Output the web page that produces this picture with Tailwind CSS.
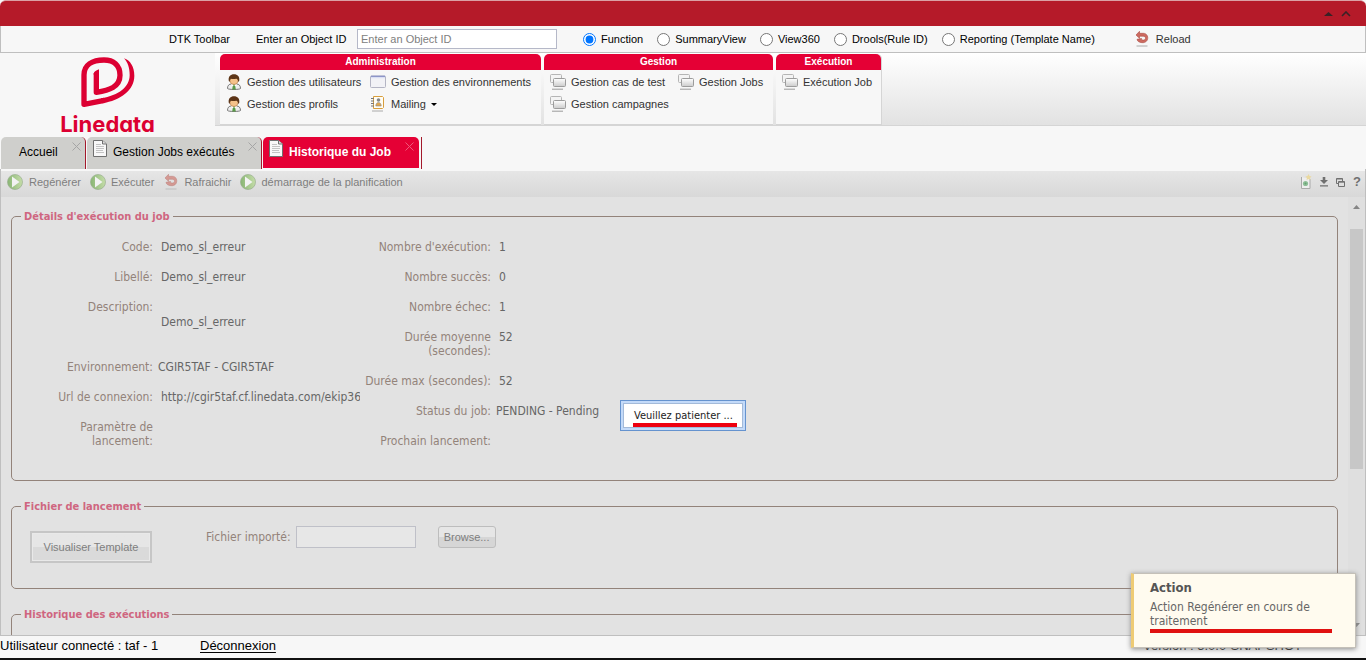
<!DOCTYPE html>
<html lang="fr">
<head>
<meta charset="utf-8">
<meta name="viewport" content="width=device-width, initial-scale=1">
<title>Historique du Job</title>
<script src="https://cdn.jsdelivr.net/npm/@tailwindcss/browser@4"></script>
</head>
<body class="relative flex h-screen flex-col overflow-hidden bg-[#f7f7f7] font-['Liberation_Sans',Arial,sans-serif] text-[11px] text-black">
<svg class="absolute size-0" aria-hidden="true">
  <defs>
    <linearGradient id="gGreen" x1="0" x2="1"><stop offset="0" stop-color="#4f9a2c"/><stop offset="1" stop-color="#b5dc86"/></linearGradient>
    <linearGradient id="gBox" x1="0" x2="0" y1="0" y2="1"><stop offset="0" stop-color="#fff"/><stop offset="1" stop-color="#ccc"/></linearGradient>
  </defs>
  <symbol id="user" viewBox="0 0 16 16">
    <path d="M1.500 14.500c0-3 1.500-4.500 4-4.500h5c2.500 0 4 1.500 4 4.500-1 1.300-12 1.300-13 0z" fill="#eee" stroke="#777"/>
    <path d="M7 10h2l.8 5.500H6.200z" fill="#5a9a48"/>
    <path d="M5 9.500l3 1.500 3-1.500-1 3-2-1.500-2 1.500z" fill="#fff"/>
    <ellipse cx="8" cy="6.500" rx="4" ry="4" fill="#f5c28a" stroke="#b77b45" stroke-width=".6"/>
    <path d="M2.800 7C2 2.500 4.500.3 8 .3S14 2.500 13.200 7l-1 1c0-2-.7-3-2-3.300-2 .5-4 .4-5.400 0C4 5.500 3.800 6.500 3.800 8z" fill="#5d3517"/>
  </symbol>
  <symbol id="window" viewBox="0 0 16 16">
    <rect x=".5" y="2" width="15" height="11.500" rx="1" fill="#f2f2f6" stroke="#b4b5c4"/>
    <path d="M1 1.700h14v1.600H1z" fill="#8d95c8"/><path d="M1 3.300h14v1H1z" fill="#dfe3f8"/>
  </symbol>
  <symbol id="book" viewBox="0 0 16 16">
    <path d="M3.500.500h9l1 1v10l-1 1h-9z" fill="#fffdf4" stroke="#d89e3d"/>
    <path d="M1 2.500h3M1 5h3M1 7.500h3M1 10h3" stroke="#777"/>
    <circle cx="8.500" cy="4" r="1.800" fill="#888"/><path d="M5.800 10c0-4.800 5.400-4.800 5.400 0z" fill="#e0a64d" stroke="#888" stroke-width=".6"/>
    <path d="M2 15h11" stroke="#aaa"/>
  </symbol>
  <symbol id="stack" viewBox="0 0 16 16">
    <rect x=".5" y=".5" width="11" height="8" rx="1" fill="#f4f4f4" stroke="#b5b5b5"/>
    <rect x="3.500" y="4.500" width="12" height="8" rx="1" fill="url(#gBox)" stroke="#9c9c9c"/>
    <path d="M2 15.200h11" stroke="#9a9a9a"/>
  </symbol>
  <symbol id="undo" viewBox="0 0 16 16">
    <path d="M5.500.3L2 4l3.500 3.300V5.200h3.700c3 0 3.200 3.800 0 3.900C8 9.100 7.500 8.500 7.500 7.500L3 8.300c.3 2.300 2.800 3.500 6.200 3.400 6.300-.5 5.800-9.400.2-9.400H5.500z" fill="#cd6a60" stroke="#a94b43" stroke-width=".6"/>
    <path d="M2.500 15h11" stroke="#aaa"/>
  </symbol>
  <symbol id="play" viewBox="0 0 16 16">
    <circle cx="8" cy="8" r="7.500" fill="url(#gGreen)" stroke="#6b8f5c" stroke-width=".7"/>
    <path d="M5 2.500L12.500 8 5 13.500z" fill="#fff"/>
  </symbol>
  <symbol id="page" viewBox="0 0 14 17">
    <path d="M.5.500h9L13.500 4v12.500H.5z" fill="#f8f8f8" stroke="#707070"/>
    <path d="M9.500.500V4h4" fill="#ddd" stroke="#707070"/>
    <path d="M3 4.500h5M3 6.500h8M3 8.500h8M3 10.500h7M3 12.500h8" stroke="#b5b5b5" stroke-width=".8"/>
  </symbol>
  <symbol id="close" viewBox="0 0 9 9"><path d="M.5.500l8 8M8.500.500l-8 8" fill="none" stroke="currentColor"/></symbol>
</svg>

<header>
  <div class="flex h-[26px] items-center justify-end gap-2 rounded-t-md border-t border-[#dba0a5] bg-[#b51a29] pr-[15px] text-[#3a2226]">
    <button aria-label="Haut"><svg class="h-1 w-[9px]" viewBox="0 0 9 4"><path d="M0 4L4.500 0 9 4z" fill="currentColor"/></svg></button>
    <button aria-label="Réduire"><svg class="h-[6px] w-[10px]" viewBox="0 0 10 6"><path d="M1 5l4-4 4 4" fill="none" stroke="currentColor" stroke-width="1.600"/></svg></button>
  </div>
  <form class="flex h-[27px] items-center border-x border-b border-[#bfbfbf] pl-[168px]">
    <span class="w-[87px]">DTK Toolbar</span>
    <label for="oid" class="w-[101px]">Enter an Object ID</label>
    <input id="oid" type="text" placeholder="Enter an Object ID" class="h-5 w-[200px] border border-[#b5b8c8] bg-white px-[3px] placeholder:text-[#808080]">
    <span class="ml-[26px] flex gap-[14px]">
      <label class="flex items-center gap-[5px]"><input type="radio" name="kind" checked class="size-[13px]">Function</label>
      <label class="flex items-center gap-[5px]"><input type="radio" name="kind" class="size-[13px]">SummaryView</label>
      <label class="flex items-center gap-[5px]"><input type="radio" name="kind" class="size-[13px]">View360</label>
      <label class="flex items-center gap-[5px]"><input type="radio" name="kind" class="size-[13px]">Drools(Rule ID)</label>
      <label class="flex items-center gap-[5px]"><input type="radio" name="kind" class="size-[13px]">Reporting (Template Name)</label>
    </span>
    <button type="button" class="ml-[39px] flex items-center gap-[6px] text-[#333]"><svg class="size-4"><use href="#undo"/></svg>Reload</button>
  </form>
  <div class="flex h-[84px] items-start">
    <div class="flex w-[215px] shrink-0 flex-col items-center text-[#dc0032]">
      <svg class="mt-[2px] h-[54px] w-[54px]" viewBox="96 12 162 162" role="img" aria-label="Linedata">
        <path d="M142 66V124C180 118 213 108 213 73C213 42 193 27 165 27C130 27 105 42 105 72V160L166 148" fill="none" stroke="currentColor" stroke-width="16" stroke-linejoin="round"/>
        <path d="M134 68q1-8 16-13v16h-16zM156 142C210 133 242 108 242 72C242 50 236 34 225 22C244 28 256 48 256 74C256 118 215 147 160 157z" fill="currentColor"/>
      </svg>
      <span class="pt-[2px] font-['Inter',sans-serif] text-[22px] leading-[26px] font-bold [font-feature-settings:'cv11']">Linedata</span>
    </div>
    <nav class="flex h-[73px] flex-1 items-start gap-[3px] border-b border-[#d5d5d5] bg-linear-to-b from-white to-[#e2e2e2] pt-px pl-[5px] text-[#333]">
      <section class="h-[71px] w-[321px] rounded-t-[5px] border-b border-[#d5d5d5] bg-[#f7f7f7]">
        <h2 class="h-4 rounded-t-[5px] bg-[#e50035] text-center text-[10px] leading-4 font-bold text-white">Administration</h2>
        <div class="grid auto-rows-[16px] grid-cols-[144px_1fr] gap-y-[6px] pt-1 pl-[6px]">
          <button class="flex items-center gap-[5px] whitespace-nowrap"><svg class="size-4"><use href="#user"/></svg>Gestion des utilisateurs</button>
          <button class="flex items-center gap-[5px] whitespace-nowrap"><svg class="size-4"><use href="#window"/></svg>Gestion des environnements</button>
          <button class="flex items-center gap-[5px]"><svg class="size-4"><use href="#user"/></svg>Gestion des profils</button>
          <button class="flex items-center gap-[5px]"><svg class="size-4"><use href="#book"/></svg>Mailing<svg class="h-[3px] w-[6px]" viewBox="0 0 6 3"><path d="M0 0h6L3 3z"/></svg></button>
        </div>
      </section>
      <section class="h-[71px] w-[229px] rounded-t-[5px] border-b border-[#d5d5d5] bg-[#f7f7f7]">
        <h2 class="h-4 rounded-t-[5px] bg-[#e50035] text-center text-[10px] leading-4 font-bold text-white">Gestion</h2>
        <div class="grid auto-rows-[16px] grid-cols-[128px_1fr] gap-y-[6px] pt-1 pl-[6px]">
          <button class="flex items-center gap-[5px] whitespace-nowrap"><svg class="size-4"><use href="#stack"/></svg>Gestion cas de test</button>
          <button class="flex items-center gap-[5px] whitespace-nowrap"><svg class="size-4"><use href="#stack"/></svg>Gestion Jobs</button>
          <button class="flex items-center gap-[5px] whitespace-nowrap"><svg class="size-4"><use href="#stack"/></svg>Gestion campagnes</button>
        </div>
      </section>
      <section class="h-[71px] w-[106px] rounded-t-[5px] border-r border-b border-[#d5d5d5] bg-[#f7f7f7]">
        <h2 class="h-4 rounded-t-[5px] bg-[#e50035] text-center text-[10px] leading-4 font-bold text-white">Exécution</h2>
        <div class="pt-1 pl-[6px]">
          <button class="flex items-center gap-[5px] whitespace-nowrap"><svg class="size-4"><use href="#stack"/></svg>Exécution Job</button>
        </div>
      </section>
    </nav>
  </div>
</header>

<nav class="flex h-8 gap-px pl-px text-[12px]">
  <div class="flex w-[85px] items-start rounded-t-[5px] border-r border-[#a3192b] bg-[#cfcfcc] pl-[18px]">
    <a href="#" class="leading-[30px]">Accueil</a><button aria-label="Fermer Accueil" class="mt-[5px] mr-1 ml-auto text-[#a5a5a5]"><svg class="size-[9px]"><use href="#close"/></svg></button>
  </div>
  <div class="flex w-[175px] items-start rounded-t-[5px] border-r border-[#a3192b] bg-[#cfcfcc] pl-[6px]">
    <svg class="mt-[3px] mr-[6px] h-[17px] w-[14px]"><use href="#page"/></svg>
    <a href="#" class="leading-[30px]">Gestion Jobs exécutés</a><button aria-label="Fermer Gestion Jobs" class="mt-[5px] mr-1 ml-auto text-[#a5a5a5]"><svg class="size-[9px]"><use href="#close"/></svg></button>
  </div>
  <div class="flex w-[159px] border-r border-[#a3192b] pr-[2px]">
  <div class="flex h-[31px] flex-1 items-start rounded-t-[5px] bg-[#e50035] pl-[6px] font-bold text-white">
    <svg class="mt-[3px] mr-[6px] h-[17px] w-[14px]"><use href="#page"/></svg>
    <a href="#" class="leading-[30px]">Historique du Job</a><button aria-label="Fermer Historique du Job" class="mt-[5px] mr-[5px] ml-auto text-[#f0587a]"><svg class="size-[9px]"><use href="#close"/></svg></button>
  </div>
  </div>
</nav>

<main class="flex min-h-0 flex-1 flex-col border-x border-b border-[#bfbfbf] bg-[#e2e2e2] font-['DejaVu_Sans_Condensed',Tahoma,sans-serif] text-[12px] leading-[14px]">
  <div class="flex h-7 shrink-0 items-center gap-[9px] border-t-2 border-[#f7f7f7] bg-linear-to-b from-[#e6e6e6] to-[#d8d8d8] pr-1 pb-1 pl-[6px] font-['Liberation_Sans',Arial,sans-serif] text-[11px] text-[#7e7e7e]">
    <button class="flex items-center gap-[6px]"><svg class="size-4 opacity-60"><use href="#play"/></svg>Regénérer</button>
    <button class="flex items-center gap-[5px]"><svg class="size-4 opacity-60"><use href="#play"/></svg>Exécuter</button>
    <button class="flex items-center gap-[5px]"><svg class="size-4 opacity-60"><use href="#undo"/></svg>Rafraichir</button>
    <button class="flex items-center gap-[5px]"><svg class="size-4 opacity-60"><use href="#play"/></svg>démarrage de la planification</button>
    <span class="ml-auto flex items-center gap-2 text-[#707070]">
      <button aria-label="Actualiser"><svg class="h-4 w-3" viewBox="0 0 12 16"><path d="M1.500 3v11.500h8.500V5" fill="#eee" stroke="#aaa"/><circle cx="5.500" cy="9.500" r="2.600" fill="#8fbf98"/><circle cx="5.500" cy="9.500" r="1" fill="#66a072"/><path d="M8.500 0l1 2 2 .5-1.500 1.500.5 2-2-1-2 1 .5-2L5.500 2.500l2-.5z" fill="#ead9a0"/></svg></button>
      <button aria-label="Télécharger"><svg class="h-[10px] w-2" viewBox="0 0 8 10"><path d="M2.700 0h2.600v3H8L4 7 0 3h2.700zM0 8.200h8v1.300H0z" fill="currentColor"/></svg></button>
      <button aria-label="Fenêtres"><svg class="h-[9px] w-[9px]" viewBox="0 0 9 9"><path d="M2 5.500H.5v-5h6V3M.5 1h6M2.500 3.500h6v5h-6zM2.500 4.200h6" fill="none" stroke="currentColor"/></svg></button>
      <button aria-label="Aide" class="text-[13px] leading-[14px] font-bold">?</button>
    </span>
  </div>

  <div class="flex min-h-0 flex-1">
    <form class="flex min-w-0 flex-1 flex-col gap-[19px] overflow-hidden pt-[13px] pr-[10px] pl-[10px] text-[#93837a]">
      <fieldset class="h-[271px] shrink-0 rounded-[5px] border border-[#93837a] pl-[41px]">
        <legend class="-ml-8 h-3 px-[3px] text-[11px] font-bold text-[#cf6680]">Détails d'exécution du job</legend>
        <div class="flex pt-[18px]">
          <dl class="grid w-[303px] grid-cols-[100px_199px] content-start gap-x-2 gap-y-4">
            <dt class="text-right">Code:</dt><dd class="text-[#666]">Demo_sl_erreur</dd>
            <dt class="text-right">Libellé:</dt><dd class="text-[#666]">Demo_sl_erreur</dd>
            <dt class="h-11 text-right">Description:</dt><dd class="pt-[15px] text-[#666]">Demo_sl_erreur</dd>
            <dt class="text-right">Environnement:</dt><dd class="-ml-[3px] text-[#666]">CGIR5TAF - CGIR5TAF</dd>
            <dt class="text-right whitespace-nowrap">Url de connexion:</dt><dd class="overflow-hidden whitespace-nowrap text-[#666]">http://cgir5taf.cf.linedata.com/ekip36</dd>
            <dt class="text-right">Paramètre de lancement:</dt><dd></dd>
          </dl>
          <dl class="grid grid-cols-[135px_130px] content-start gap-x-2 gap-y-4">
            <dt class="text-right">Nombre d'exécution:</dt><dd class="text-[#666]">1</dd>
            <dt class="text-right">Nombre succès:</dt><dd class="text-[#666]">0</dd>
            <dt class="text-right">Nombre échec:</dt><dd class="text-[#666]">1</dd>
            <dt class="text-right">Durée moyenne<br>(secondes):</dt><dd class="text-[#666]">52</dd>
            <dt class="text-right whitespace-nowrap">Durée max (secondes):</dt><dd class="text-[#666]">52</dd>
            <dt class="text-right">Status du job:</dt><dd class="-ml-[3px] text-[#666]">PENDING - Pending</dd>
            <dt class="text-right">Prochain lancement:</dt><dd></dd>
          </dl>
        </div>
      </fieldset>

      <fieldset class="h-[89px] shrink-0 rounded-[5px] border border-[#93837a] pl-[18px]">
        <legend class="-ml-[9px] h-3 px-[3px] text-[11px] font-bold text-[#cf6680]">Fichier de lancement</legend>
        <div class="flex items-start pt-[14px]">
          <button type="button" class="mt-[5px] h-8 w-[122px] border-2 border-[#c6c6c6] bg-linear-to-b from-[#e6e6e6] from-50% to-[#dadada] to-50% font-['Liberation_Sans',Arial,sans-serif] text-[11px] text-[#7e7e7e] inset-ring inset-ring-[#e9e9e9]">Visualiser Template</button>
          <label for="file" class="ml-[54px] pt-1">Fichier importé:</label>
          <input id="file" type="text" class="ml-[5px] h-[22px] w-[120px] border border-[#bfc0c8] bg-[#e7e7e7] px-1">
          <button type="button" class="ml-[22px] h-[22px] w-[58px] rounded-[3px] border border-[#bdbdbd] bg-linear-to-b from-[#e6e6e6] from-50% to-[#d6d6d6] to-50% font-['Liberation_Sans',Arial,sans-serif] text-[11px] text-[#7e7e7e]">Browse...</button>
        </div>
      </fieldset>

      <fieldset class="h-40 shrink-0 rounded-[5px] border border-[#93837a] pl-[18px]">
        <legend class="-ml-[9px] h-3 px-[3px] text-[11px] font-bold text-[#cf6680]">Historique des exécutions</legend>
      </fieldset>
    </form>
    <div class="flex w-[17px] shrink-0 flex-col items-center bg-[#dfdfdf] py-2 text-[#858585]">
      <svg class="h-1 w-[7px]" viewBox="0 0 7 4"><path d="M0 4L3.500 0 7 4z" fill="currentColor"/></svg>
      <div class="mt-5 h-60 w-[13px] bg-[#c7c7c7]"></div>
      <svg class="mt-auto h-1 w-[7px]" viewBox="0 0 7 4"><path d="M0 0L3.500 4 7 0z" fill="currentColor"/></svg>
    </div>
  </div>
</main>

<footer class="flex h-6 shrink-0 items-start border-b-2 border-[#111] pt-[2px] text-[13px] leading-4">
  <span class="w-[200px]">Utilisateur connecté : taf - 1</span>
  <a href="#" class="underline underline-offset-2">Déconnexion</a>
  <span class="mr-16 ml-auto">Version : 5.0.0-SNAPSHOT</span>
</footer>

<div role="status" class="absolute top-[400px] left-1/2 h-[31px] w-[126px] -translate-x-1/2 border border-[#6593cf] bg-[#c3daf9] p-[2px]">
  <div class="h-full border border-[#a3bad9] bg-white pt-[5px] pl-[10px] font-['DejaVu_Sans_Condensed',Tahoma,sans-serif] leading-[14px] whitespace-nowrap text-[#222]">Veuillez patienter ...<div class="h-1 w-[104px] -ml-px bg-[#ee0010]"></div></div>
</div>

<div role="alert" class="absolute right-[10px] bottom-3 h-[75px] w-[225px] border border-l-[3px] border-[#c4c0b8] border-l-[#eecb74] bg-[#fffbef] pt-[7px] pl-4 font-['DejaVu_Sans_Condensed',Tahoma,sans-serif] text-[12px] leading-[14px] text-[#666] shadow-[0_1px_5px_#888]">
  <p class="mb-[5px] text-[13px] font-bold text-[#555]">Action</p>
  <p class="w-[180px]">Action Regénérer en cours de traitement</p>
  <div class="mt-px h-1 w-[182px] bg-[#e01010]"></div>
</div>
</body>
</html>
